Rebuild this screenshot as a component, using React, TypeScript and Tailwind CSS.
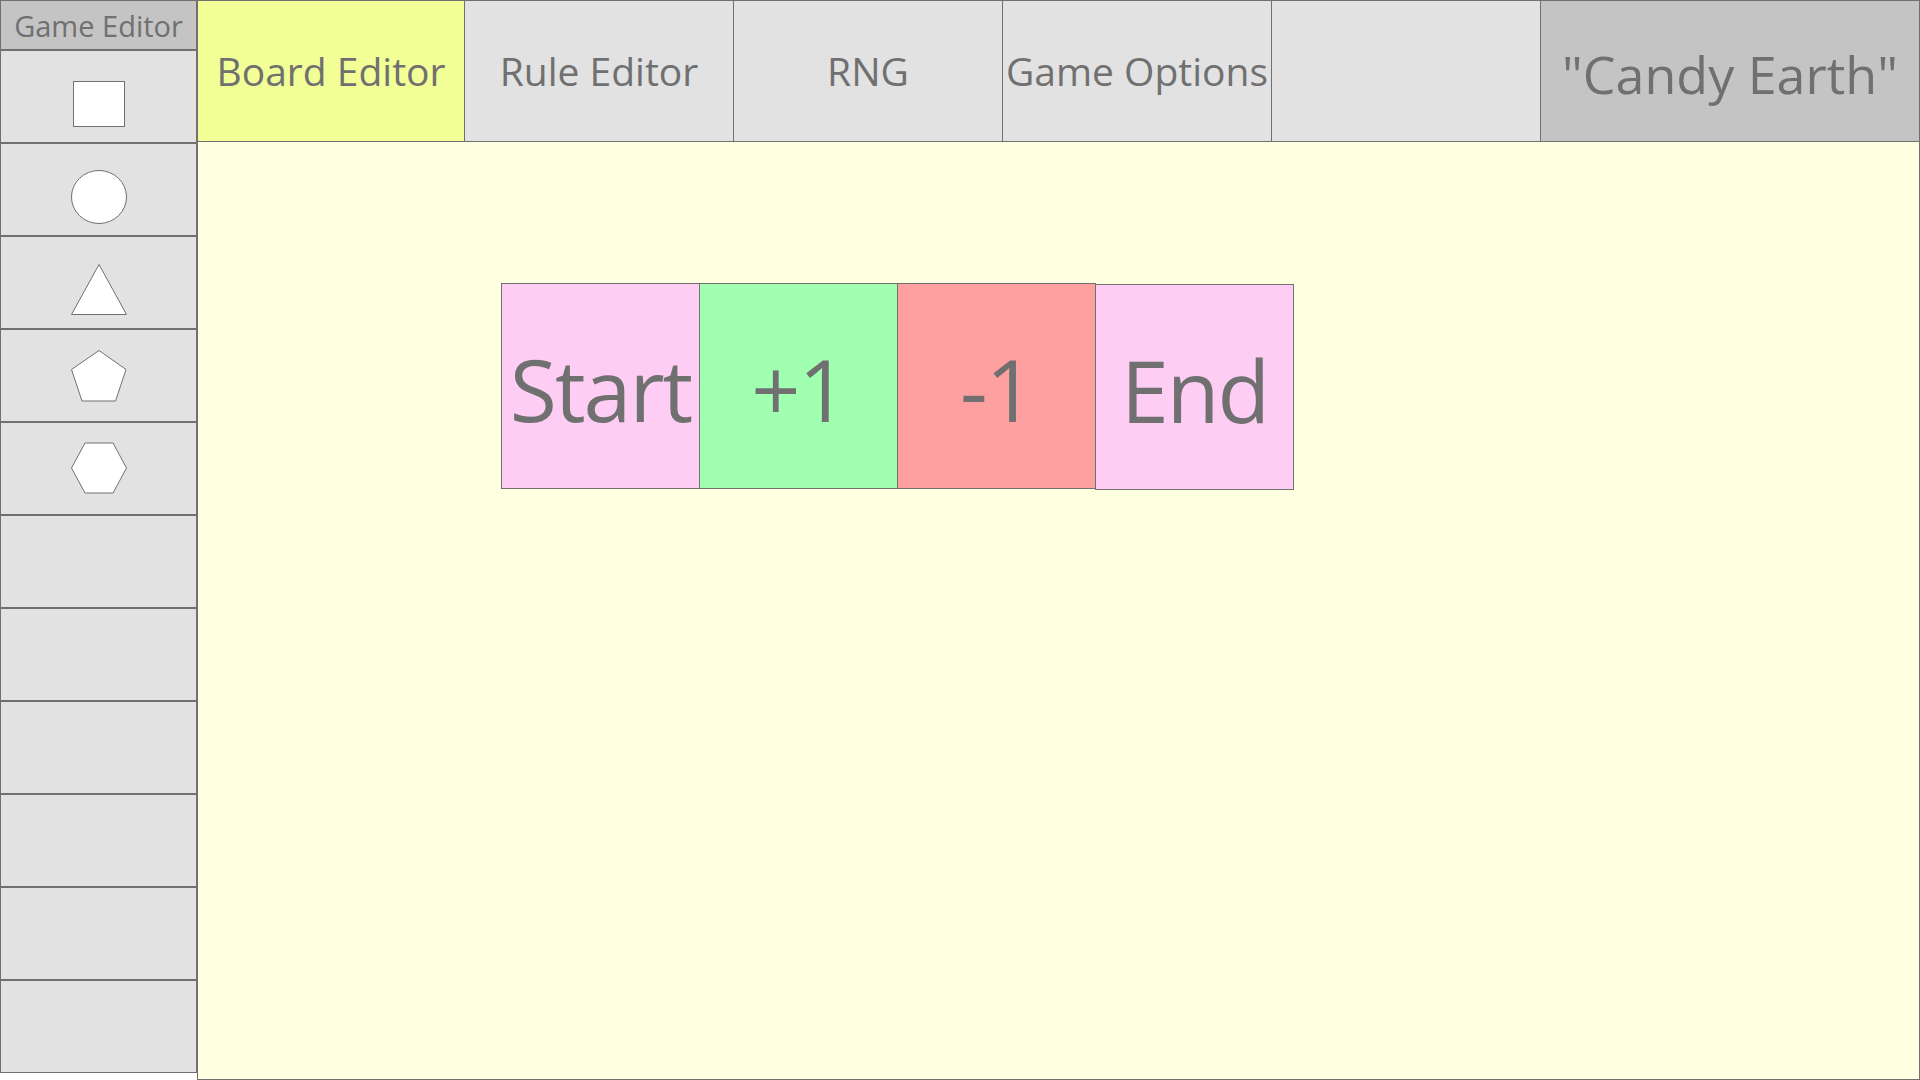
import React from "react";

const FONT = "font-['Open_Sans','Noto_Sans',sans-serif]";

const TABS = ["Board Editor", "Rule Editor", "RNG", "Game Options", ""];

function Shape({ kind }: { kind: string }) {
  const stroke = "#707070";
  if (kind === "square")
    return (
      <svg width="54" height="48" viewBox="0 0 54 48">
        <rect x="1.5" y="1.5" width="51" height="45" fill="#fff" stroke={stroke} strokeWidth="1" />
      </svg>
    );
  if (kind === "circle")
    return (
      <svg width="58" height="56" viewBox="0 0 58 56">
        <ellipse cx="29" cy="28" rx="27.5" ry="26.5" fill="#fff" stroke={stroke} strokeWidth="1" />
      </svg>
    );
  if (kind === "triangle")
    return (
      <svg width="58" height="54" viewBox="0 0 58 54">
        <polygon points="29,1.5 56.5,51.5 1.5,51.5" fill="#fff" stroke={stroke} strokeWidth="1" />
      </svg>
    );
  if (kind === "pentagon")
    return (
      <svg width="58" height="54" viewBox="0 0 58 54">
        <polygon points="29,1.5 56,20.5 45.5,52 12,52 1.5,20.5" fill="#fff" stroke={stroke} strokeWidth="1" />
      </svg>
    );
  return (
    <svg width="58" height="52" viewBox="0 0 58 52">
      <polygon points="15,1 43,1 56.5,26 43,51 15,51 1.5,26" fill="#fff" stroke={stroke} strokeWidth="1" />
    </svg>
  );
}

// shape + its top padding inside the row
const SIDE = [
  { kind: "square", pad: "pt-[29px]" },
  { kind: "circle", pad: "pt-[25px]" },
  { kind: "triangle", pad: "pt-[26px]" },
  { kind: "pentagon", pad: "pt-[19px]" },
  { kind: "hexagon", pad: "pt-[19px]" },
  { kind: "", pad: "" },
  { kind: "", pad: "" },
  { kind: "", pad: "" },
  { kind: "", pad: "" },
  { kind: "", pad: "" },
  { kind: "", pad: "" },
];

const TILES = [
  { label: "Start", bg: "bg-[#fdcdf3]", extra: "" },
  { label: "+1", bg: "bg-[#a0ffb0]", extra: "" },
  { label: "-1", bg: "bg-[#ffa0a0]", extra: "" },
  { label: "End", bg: "bg-[#fdcdf3]", extra: "mt-px" },
];

export default function App() {
  return (
    <div className={`flex h-[1080px] w-[1920px] overflow-hidden bg-white text-[#707070] ${FONT}`}>
      {/* left tool column */}
      <div className="flex w-[197px] shrink-0 flex-col">
        <div className="flex h-[50px] items-center justify-center border border-[#707070] bg-[#c4c4c4] text-[29px] leading-none">
          Game Editor
        </div>
        {SIDE.map((s, i) => (
          <div
            key={i}
            className={`flex h-[93px] items-start justify-center border border-[#707070] bg-[#e2e2e2] ${s.pad}`}
          >
            {s.kind && <Shape kind={s.kind} />}
          </div>
        ))}
      </div>

      <div className="flex flex-1 flex-col">
        {/* tab bar */}
        <div className="flex h-[142px] shrink-0">
          <div className="flex w-[268px] items-center justify-center border border-[#707070] bg-[#f1ff96] text-[39px]">
            Board Editor
          </div>
          {TABS.slice(1).map((t, i) => (
            <div
              key={i}
              className="flex w-[269px] items-center justify-center overflow-hidden whitespace-nowrap border border-l-0 border-[#707070] bg-[#e2e2e2] text-[39px]"
            >
              {t}
            </div>
          ))}
          <div className="flex flex-1 items-center justify-center border border-l-0 border-[#707070] bg-[#c4c4c4] pt-[6px] text-[52px]">
            "Candy Earth"
          </div>
        </div>

        {/* board canvas */}
        <div className="flex-1 border border-t-0 border-[#707070] bg-[#ffffe1] pl-[303px] pt-[141px]">
          <div className="flex items-start">
            {TILES.map((t) => (
              <div
                key={t.label}
                className={`flex h-[206px] w-[199px] items-center justify-center border border-[#707070] pt-[6px] ${t.bg} ${t.extra} -ml-px first:ml-0 text-[86px] leading-none tracking-[-2px]`}
              >
                {t.label}
              </div>
            ))}
          </div>
        </div>
      </div>
    </div>
  );
}
